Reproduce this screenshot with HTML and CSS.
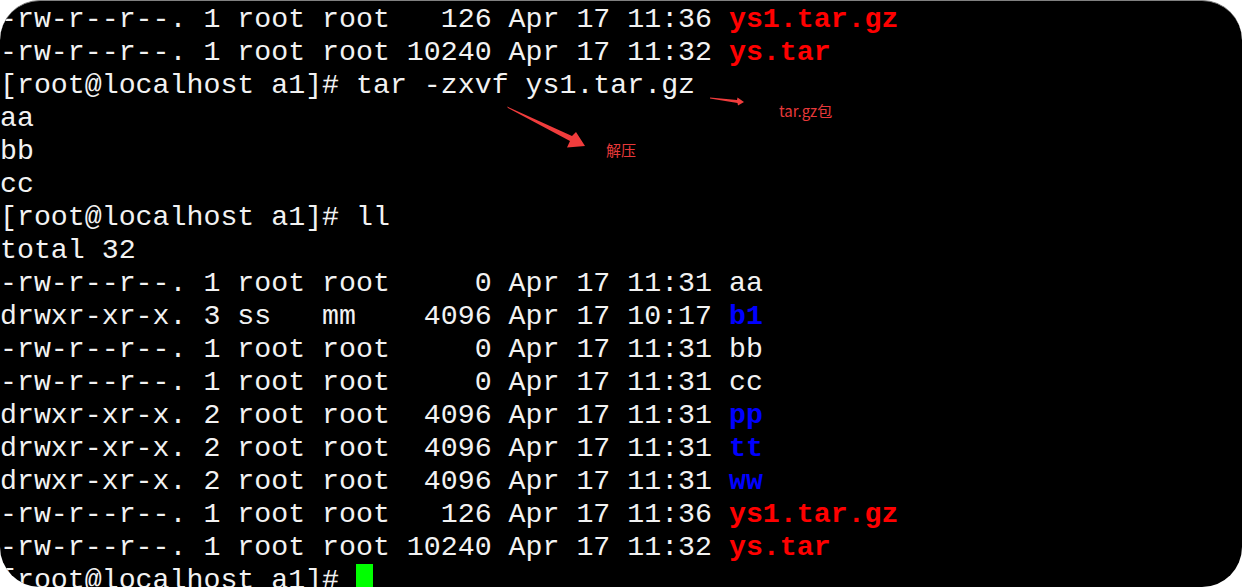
FILE: index.html
```html
<!DOCTYPE html>
<html lang="zh-CN">
<head>
<meta charset="utf-8">
<title>terminal</title>
<link rel="stylesheet" href="styles.css">
</head>
<body>
<div class="term">
  <div class="lines">
    <div class="ln">-rw-r--r--. 1 root root   126 Apr 17 11:36 <b class="red">ys1.tar.gz</b></div>
    <div class="ln">-rw-r--r--. 1 root root 10240 Apr 17 11:32 <b class="red">ys.tar</b></div>
    <div class="ln">[root@localhost a1]# tar -zxvf ys1.tar.gz</div>
    <div class="ln">aa</div>
    <div class="ln">bb</div>
    <div class="ln">cc</div>
    <div class="ln">[root@localhost a1]# ll</div>
    <div class="ln">total 32</div>
    <div class="ln">-rw-r--r--. 1 root root     0 Apr 17 11:31 aa</div>
    <div class="ln">drwxr-xr-x. 3 ss   mm    4096 Apr 17 10:17 <b class="blue">b1</b></div>
    <div class="ln">-rw-r--r--. 1 root root     0 Apr 17 11:31 bb</div>
    <div class="ln">-rw-r--r--. 1 root root     0 Apr 17 11:31 cc</div>
    <div class="ln">drwxr-xr-x. 2 root root  4096 Apr 17 11:31 <b class="blue">pp</b></div>
    <div class="ln">drwxr-xr-x. 2 root root  4096 Apr 17 11:31 <b class="blue">tt</b></div>
    <div class="ln">drwxr-xr-x. 2 root root  4096 Apr 17 11:31 <b class="blue">ww</b></div>
    <div class="ln">-rw-r--r--. 1 root root   126 Apr 17 11:36 <b class="red">ys1.tar.gz</b></div>
    <div class="ln">-rw-r--r--. 1 root root 10240 Apr 17 11:32 <b class="red">ys.tar</b></div>
    <div class="ln">[root@localhost a1]# <span class="cursor"> </span></div>
  </div>
  <svg class="arrows" width="1242" height="587" viewBox="0 0 1242 587">
    <polygon points="710,97.5 737,100 737.5,97.5 744,102 738,105.5 737.5,103 710,98.5" fill="#f03c3c"/>
    <polygon points="507,106.5 572,136 576,132 585,146 567,147.5 570,141 508,108" fill="#f03c3c"/>
  </svg>
  <div class="note note-pkg">tar.gz包</div>
  <div class="note note-unz">解压</div>
</div>
</body>
</html>
```
FILE: styles.css
```css
html, body {
  margin: 0;
  padding: 0;
  background: #ffffff;
}
.term {
  position: relative;
  width: 1242px;
  height: 587px;
  box-sizing: border-box;
  background: #000000;
  border-top: 1px solid #808080;
  border-radius: 40px;
  overflow: hidden;
}
.lines {
  padding-top: 2px;
  padding-left: 0;
  font-family: "Courier New", "Nimbus Mono PS", "Nimbus Mono L", "FreeMono", Courier, "Liberation Mono", monospace;
  font-size: 28.25px;
  line-height: 33px;
  color: #f2f2f2;
}
.ln {
  white-space: pre;
  height: 33px;
}
.red {
  color: #ff0000;
  font-weight: bold;
}
.blue {
  color: #0000ff;
  font-weight: bold;
}
.cursor {
  display: inline-block;
  width: 17px;
  height: 33px;
  background: #00ff00;
  vertical-align: top;
}
.arrows {
  position: absolute;
  left: 0;
  top: -1px;
}
.note {
  position: absolute;
  font-family: "Noto Sans CJK SC", "Noto Sans", sans-serif;
  font-size: 15px;
  line-height: 18px;
  color: #e8393a;
}
.note-pkg {
  left: 779px;
  top: 101px;
}
.note-unz {
  left: 606px;
  top: 140px;
}
```
